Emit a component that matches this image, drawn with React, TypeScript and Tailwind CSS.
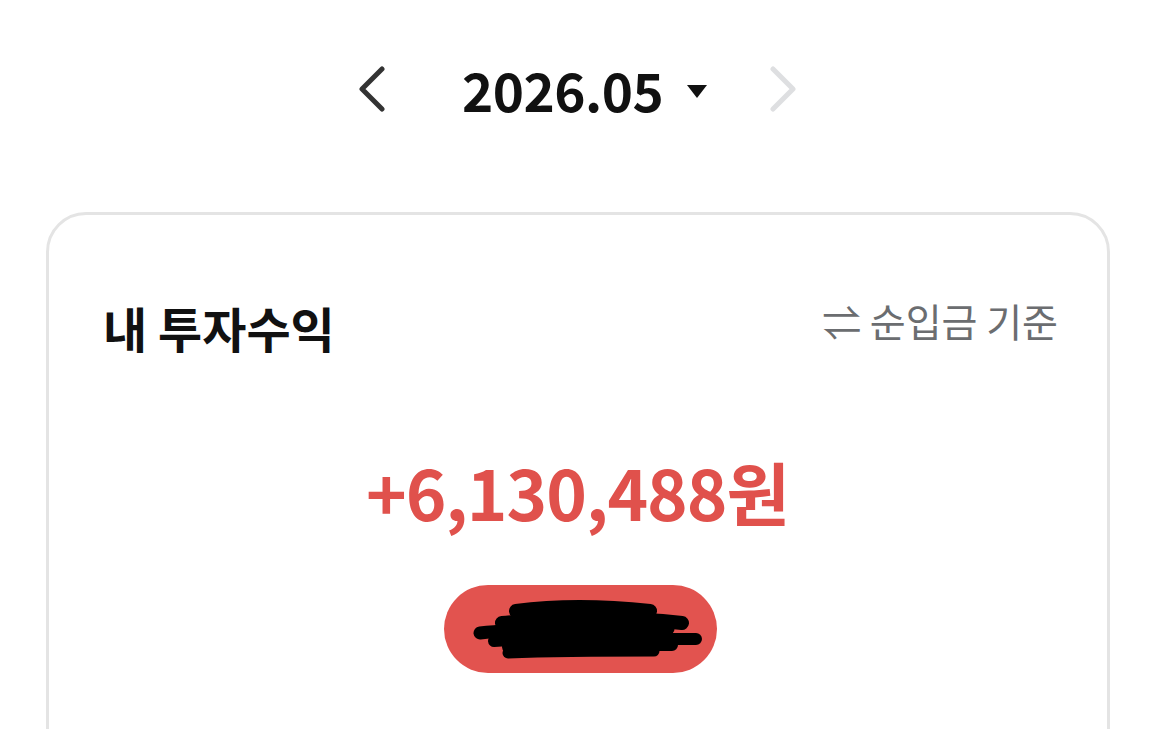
const FONT = { fontFamily: '"Noto Sans CJK KR", "Noto Sans", sans-serif' };

function Chevron({ dir, color }: { dir: 'left' | 'right'; color: string }) {
  const d = dir === 'left' ? 'M25 3 L5 23 L25 43' : 'M5 3 L25 23 L5 43';
  return (
    <svg width="30" height="46" viewBox="0 0 30 46" fill="none">
      <path d={d} stroke={color} strokeWidth="5" strokeLinecap="round" strokeLinejoin="round" />
    </svg>
  );
}

function Redaction() {
  // black marker strokes over the hidden rate
  return (
    <svg width="232" height="62" viewBox="0 0 232 62" className="absolute left-[28px] top-[14px]">
      <g stroke="#000" strokeLinecap="round" fill="none">
        <path d="M44 12 C90 6 140 8 178 12" strokeWidth="14" />
        <path d="M30 24 C90 18 160 18 210 24" strokeWidth="14" />
        <path d="M8 34 C60 28 140 30 196 30" strokeWidth="13" />
        <path d="M22 42 C90 38 170 40 224 40" strokeWidth="12" />
        <path d="M36 48 C100 44 160 46 200 46" strokeWidth="12" />
        <path d="M36 54 C90 52 140 52 182 52" strokeWidth="11" />
      </g>
    </svg>
  );
}

export default function App() {
  return (
    <div className="h-screen bg-white overflow-hidden" style={FONT}>
      {/* month selector */}
      <div className="flex items-center pt-[66px] pl-[357px] h-[112px]">
        <Chevron dir="left" color="#333333" />
        <div className="flex items-center ml-[75px] mr-[61px]">
          <span className="text-[53px] font-bold leading-none text-[#111111] tracking-[-0.5px]">2026.05</span>
          <span className="ml-[24px] w-0 h-0 border-l-[10px] border-r-[10px] border-t-[13px] border-l-transparent border-r-transparent border-t-[#111111] mt-[4px]" />
        </div>
        <Chevron dir="right" color="#dedfe1" />
      </div>

      {/* card */}
      <div className="ml-[46px] mr-[53px] mt-[100px] border-[3px] border-[#e4e4e4] rounded-[40px] pl-[54px] pr-[49px] pt-[88px] pb-[120px]">
        <div className="flex items-center justify-between">
          <h2 className="text-[48px] font-bold text-[#111111] leading-none">내 투자수익</h2>
          <span className="text-[39px] text-[#6b6d70] leading-none -mt-[14px]">⇌ 순입금 기준</span>
        </div>
        <div className="flex flex-col items-center mt-[106px]">
          <span className="text-[69px] font-bold leading-none text-[#e0514c] tracking-[-1px] mr-[6px]">+6,130,488원</span>
          <div className="relative mt-[59px] w-[273px] h-[88px] rounded-full bg-[#e2534f]">
            <Redaction />
          </div>
        </div>
      </div>
    </div>
  );
}
